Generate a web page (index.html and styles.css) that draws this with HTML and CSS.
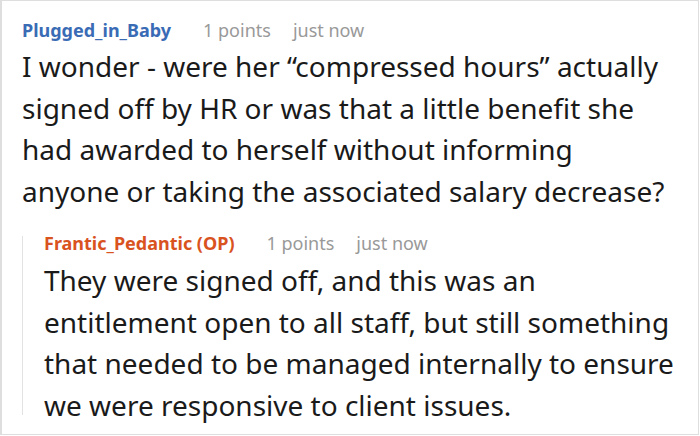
FILE: index.html
```html
<!DOCTYPE html>
<html lang="en">
<head>
<meta charset="utf-8">
<link rel="stylesheet" href="styles.css">
</head>
<body>
<div class="frame">
  <div class="comment">
    <div class="meta">
      <span class="author">Plugged_in_Baby</span>
      <span class="points">1 points</span>
      <span class="time">just now</span>
    </div>
    <p class="text main-text">I wonder - were her “compressed hours” actually signed off by HR or was that a little benefit she had awarded to herself without informing anyone or taking the associated salary decrease?</p>
    <div class="reply">
      <div class="meta">
        <span class="author op">Frantic_Pedantic (OP)</span>
        <span class="points">1 points</span>
        <span class="time">just now</span>
      </div>
      <p class="text">They were signed off, and this was an entitlement open to all staff, but still something that needed to be managed internally to ensure we were responsive to client issues.</p>
    </div>
  </div>
</div>
</body>
</html>
```

FILE: styles.css
```css
html, body {
  margin: 0;
  padding: 0;
  background: #ffffff;
}
body {
  font-family: "Noto Sans", "Open Sans", sans-serif;
  color: #1a1a1a;
}
.frame {
  box-sizing: border-box;
  width: 699px;
  height: 435px;
  border: 1px solid #dedede;
  border-left-width: 2px;
  overflow: hidden;
}
.comment {
  padding: 17px 20px 0 20px;
}
.meta {
  display: flex;
  align-items: baseline;
  font-size: 18px;
  line-height: 24px;
}
.author {
  font-weight: 700;
  color: #3a6bb5;
  margin-right: 32px;
}
.author.op {
  color: #d9531f;
}
.points, .time {
  color: #999999;
}
.points {
  margin-right: 22px;
}
.text {
  margin: 4px 0 0 0;
  font-size: 28px;
  line-height: 41.5px;
  color: #1a1a1a;
}
.main-text {
  margin-right: 12px;
}
.reply {
  margin-top: 24px;
  padding-left: 22px;
  background: linear-gradient(#e2e2e2, #e2e2e2) no-repeat 0 0 / 1px calc(100% - 11px);
}
.reply .meta {
  line-height: 14px;
}
.reply .text {
  margin-top: 10px;
}
```
